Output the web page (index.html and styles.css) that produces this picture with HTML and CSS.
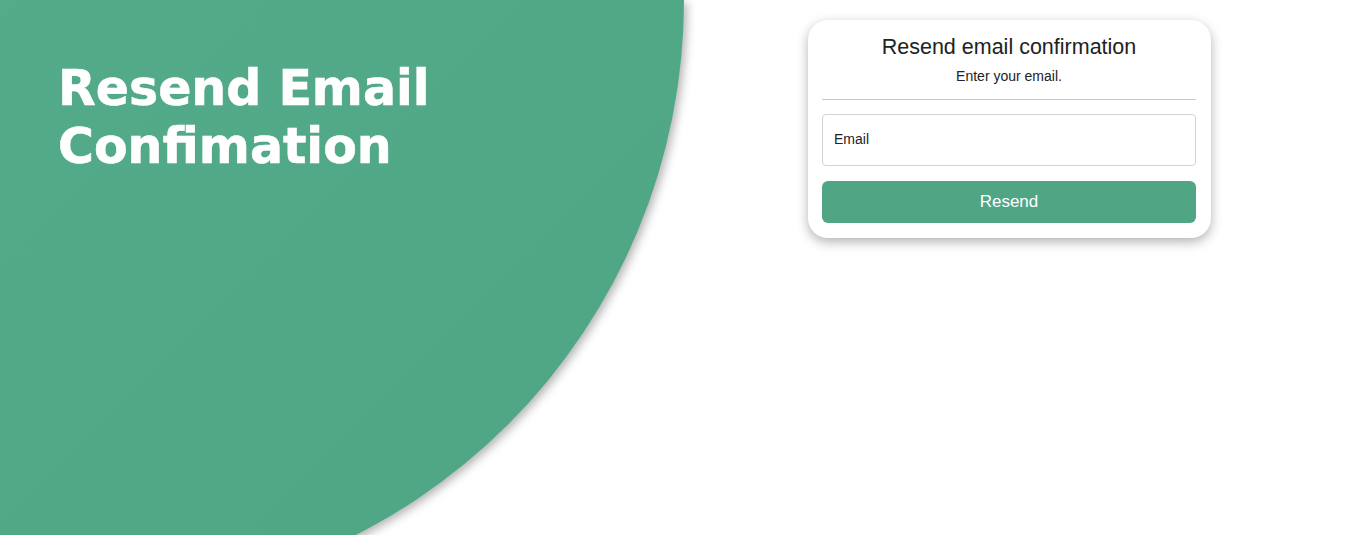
FILE: index.html
```html
<!DOCTYPE html>
<html lang="en">
<head>
<meta charset="utf-8">
<title>Resend Email Confirmation</title>
<link rel="stylesheet" href="styles.css">
</head>
<body>
<div class="backdrop"><div class="blob"></div></div>
<main class="page">
  <section class="hero">
    <h1 class="hero-title">Resend Email<br>Confimation</h1>
  </section>
  <section class="side">
    <form class="card">
      <h2 class="card-title">Resend email confirmation</h2>
      <p class="card-sub">Enter your email.</p>
      <hr class="divider">
      <div class="field">
        <input class="field-input" type="email" id="email" placeholder="Email">
      </div>
      <button class="btn" type="button">Resend</button>
    </form>
  </section>
</main>
</body>
</html>
```
FILE: styles.css
```css
html, body {
  margin: 0;
  padding: 0;
  height: 100%;
  overflow: hidden;
  background: #ffffff;
  font-family: "Liberation Sans", Arial, sans-serif;
}

body {
  position: relative;
}

.backdrop {
  position: absolute;
  inset: 0;
  z-index: 0;
  filter: drop-shadow(3px 3px 5px rgba(0, 0, 0, 0.3));
}

.blob {
  width: 100%;
  height: 100%;
  background: linear-gradient(135deg, #53ab8a 0%, #4fa685 60%);
  clip-path: circle(600px at 84px 0);
}

.page {
  position: relative;
  z-index: 1;
  display: grid;
  grid-template-columns: 808px 403px;
  align-items: start;
}

.hero {
  padding: 60px 0 0 58px;
}

.hero-title {
  margin: 0;
  color: #ffffff;
  font-family: "DejaVu Sans", sans-serif;
  font-weight: 700;
  font-size: 49px;
  line-height: 58px;
  -webkit-text-stroke: 0.6px #ffffff;
}

.card {
  margin-top: 20px;
  background: #ffffff;
  border-radius: 20px;
  box-shadow: 0 4px 12px rgba(0, 0, 0, 0.3);
  padding: 15px 15px 15px 14px;
  display: flex;
  flex-direction: column;
}

.card-title {
  margin: 0;
  text-align: center;
  font-weight: 400;
  font-size: 21.5px;
  line-height: normal;
  color: #222222;
}

.card-sub {
  margin: 8px 0 0;
  text-align: center;
  font-size: 14px;
  line-height: 16px;
  color: #222222;
}

.divider {
  margin: 15px 0 14px;
  border: 0;
  border-top: 1px solid #c8c8c8;
  height: 0;
}

.field-input {
  box-sizing: border-box;
  width: 100%;
  height: 52px;
  border: 1px solid #d0d3d8;
  border-radius: 4px;
  padding: 0 11px 2px;
  font-family: "Liberation Sans", Arial, sans-serif;
  font-size: 14px;
  color: #212529;
  outline: none;
}

.field-input::placeholder {
  color: #212529;
  opacity: 1;
}

.btn {
  margin-top: 15px;
  height: 42px;
  border: 0;
  border-radius: 6px;
  background: #50a585;
  color: #ffffff;
  font-family: "Liberation Sans", Arial, sans-serif;
  font-size: 17px;
  cursor: pointer;
}
```
